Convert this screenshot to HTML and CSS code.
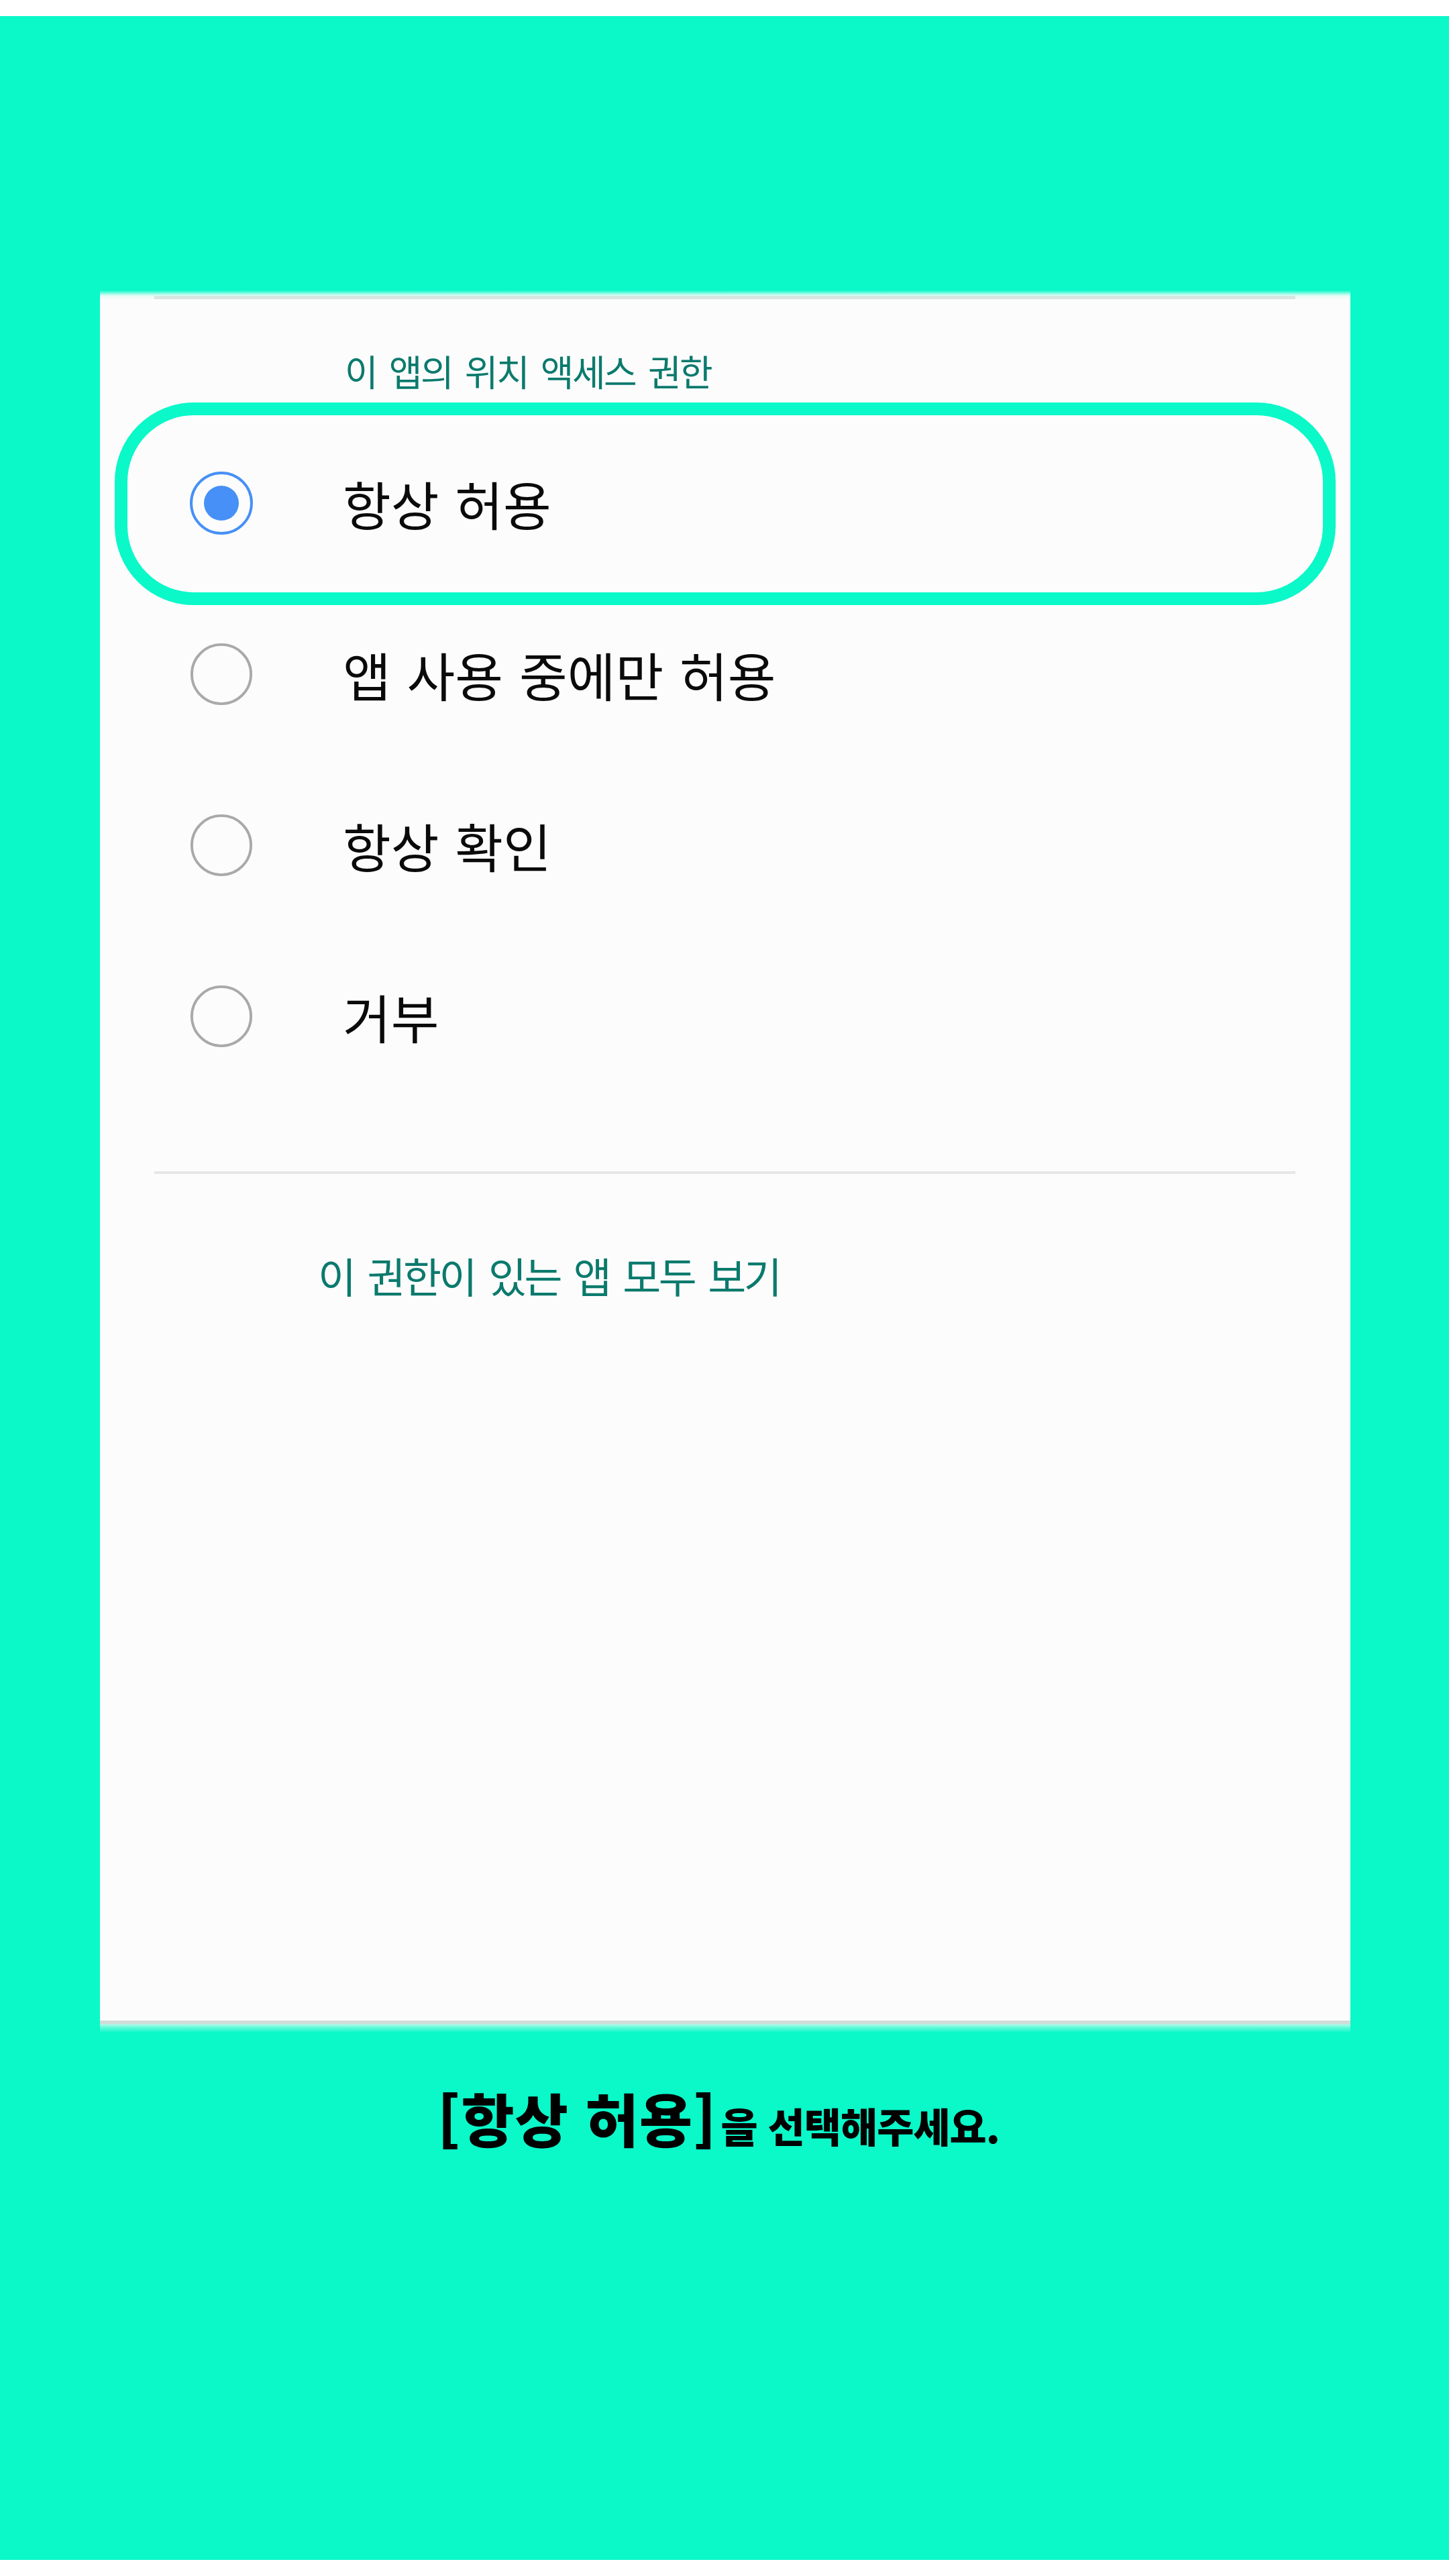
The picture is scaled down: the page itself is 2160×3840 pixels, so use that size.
FILE: index.html
```html
<!DOCTYPE html>
<html lang="ko">
<head>
<meta charset="utf-8">
<title>위치 권한</title>
<link rel="stylesheet" href="styles.css">
</head>
<body>
<main class="screen">
  <section class="card">
    <div class="card-head"><div class="rule"></div></div>
    <p class="subtitle">이 앱의 위치 액세스 권한</p>
    <ul class="options">
      <li class="option selected">
        <span class="radio on"><span class="dot"></span></span>
        <span class="label">항상 허용</span>
      </li>
      <li class="option">
        <span class="radio"></span>
        <span class="label">앱 사용 중에만 허용</span>
      </li>
      <li class="option">
        <span class="radio"></span>
        <span class="label">항상 확인</span>
      </li>
      <li class="option">
        <span class="radio"></span>
        <span class="label">거부</span>
      </li>
    </ul>
    <div class="divider"></div>
    <p class="link">이 권한이 있는 앱 모두 보기</p>
    <div class="spacer"></div>
    <div class="card-foot"></div>
  </section>
  <p class="guide"><span class="big">[항상 허용]</span><span class="small">을 선택해주세요.</span></p>
</main>
</body>
</html>
```
FILE: styles.css
```css
html, body {
  margin: 0;
  padding: 0;
  background: #ffffff;
}

body {
  font-family: "Noto Sans CJK KR", "Noto Sans", sans-serif;
}

.screen {
  margin: 24px 0;
  height: 3792px;
  box-sizing: border-box;
  padding-top: 409px;
  background: #0bf8c9;
  overflow: hidden;
}

.card {
  margin-left: 149px;
  width: 1864px;
  height: 2597px;
  background: #fcfcfc;
  display: flex;
  flex-direction: column;
}

.card-head {
  height: 13px;
  box-sizing: border-box;
  padding-top: 8px;
  background: linear-gradient(to bottom, #0bf8c9 0px, #7ffbe2 4px, #e6fcf7 8px, #fafbfb 13px);
}

.rule {
  height: 5px;
  margin: 0 82px 0 81px;
  background: #d8e6e2;
}

.subtitle {
  margin: 80px 0 0 0;
  padding-left: 365px;
  font-size: 54px;
  line-height: 54px;
  letter-spacing: -2.5px;
  word-spacing: 6px;
  color: #0b7a6d;
}

.options {
  list-style: none;
  margin: 42px 0 0 0;
  padding: 0;
}

.option {
  position: relative;
  height: 255px;
  display: flex;
  align-items: center;
  padding-left: 134px;
}

.option.selected::before {
  content: "";
  position: absolute;
  left: 22px;
  right: 22px;
  top: -22px;
  height: 302px;
  box-sizing: border-box;
  border: 19px solid #0bf8c9;
  border-radius: 118px;
}

.radio {
  width: 94px;
  height: 94px;
  box-sizing: border-box;
  border-radius: 50%;
  border: 4px solid #a9a9a9;
  display: flex;
  align-items: center;
  justify-content: center;
  flex: none;
  transform: scale(0.98);
}

.radio.on {
  border-color: #4690f7;
  transform: none;
}

.dot {
  width: 52px;
  height: 52px;
  border-radius: 50%;
  background: #4690f7;
}

.label {
  margin-left: 134px;
  font-size: 78px;
  line-height: 90px;
  letter-spacing: 0px;
  word-spacing: 2px;
  color: #0a0a0a;
}

.divider {
  height: 4px;
  margin: 104px 82px 0 81px;
  background: #e6e6e6;
}

.link {
  margin: 120px 0 0 0;
  padding-left: 325px;
  font-size: 62px;
  line-height: 62px;
  letter-spacing: -3.5px;
  word-spacing: 6px;
  color: #0b7a6d;
}

.spacer {
  flex: 1;
}

.card-foot {
  height: 18px;
  background: linear-gradient(to bottom, #cfdcd8 0px, #cfdcd8 5px, #a6fbea 6px, #5cf9d8 11px, #0bf8c9 18px);
}

.guide {
  margin: 77px 0 0 0;
  text-align: center;
  line-height: 100px;
  color: #000000;
  font-weight: 900;
  padding-right: 18px;
}

.big {
  font-size: 86px;
  letter-spacing: 1px;
}

.small {
  font-size: 60px;
  letter-spacing: -1px;
  margin-left: 6px;
}
```
